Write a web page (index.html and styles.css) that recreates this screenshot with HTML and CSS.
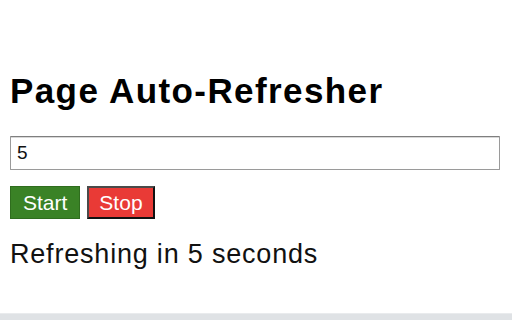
FILE: index.html
```html
<!DOCTYPE html>
<html lang="en">
<head>
<meta charset="utf-8">
<title>Page Auto-Refresher</title>
<link rel="stylesheet" href="styles.css">
</head>
<body>
<div class="page">
  <main class="panel">
    <h1 class="title">Page Auto-Refresher</h1>
    <input class="interval" type="text" value="5">
    <div class="actions">
      <button class="btn btn-start">Start</button>
      <button class="btn btn-stop">Stop</button>
    </div>
    <p class="status">Refreshing in 5 seconds</p>
  </main>
  <div class="bottom-bar"></div>
</div>
</body>
</html>
```

FILE: styles.css
```css
html, body {
  margin: 0;
  padding: 0;
  background: #ffffff;
}

.page {
  height: 320px;
  display: flex;
  flex-direction: column;
  font-family: "Liberation Sans", Arial, sans-serif;
}

.panel {
  display: flex;
  flex-direction: column;
  align-items: flex-start;
  padding: 72px 12px 0 10px;
}

.title {
  margin: 0;
  font-size: 35px;
  line-height: 38px;
  font-weight: bold;
  letter-spacing: 1.4px;
  color: #000;
}

.interval {
  box-sizing: border-box;
  margin: 26px 0 0 0;
  width: 490px;
  height: 34px;
  padding: 0 6px;
  border: 1px solid #9a9a9a;
  border-top-color: #7f7f7f;
  border-radius: 1px;
  box-shadow: inset 0 1px 0 #d8d8d8;
  font-family: "Liberation Sans", Arial, sans-serif;
  font-size: 19px;
  color: #111;
  outline: none;
}

.actions {
  display: flex;
  gap: 7px;
  margin-top: 16px;
}

.btn {
  box-sizing: border-box;
  height: 33px;
  margin: 0;
  font-family: "Liberation Sans", Arial, sans-serif;
  font-size: 21px;
  line-height: 1;
  color: #ffffff;
  cursor: pointer;
}

.btn-start {
  padding: 0 12px;
  background: #3a8226;
  border: 1px solid #2f6d1e;
}

.btn-stop {
  padding: 0 10px;
  background: #e93a36;
  border: 2px solid #111;
  border-top-color: #4a4a4a;
  border-left-color: #4a4a4a;
}

.status {
  margin: 20px 0 0 0;
  font-size: 27px;
  line-height: 30px;
  letter-spacing: 0.8px;
  color: #111;
}

.bottom-bar {
  margin-top: auto;
  height: 6px;
  background: #dfe2e5;
  border-top: 1px solid #e9ebed;
}
```
